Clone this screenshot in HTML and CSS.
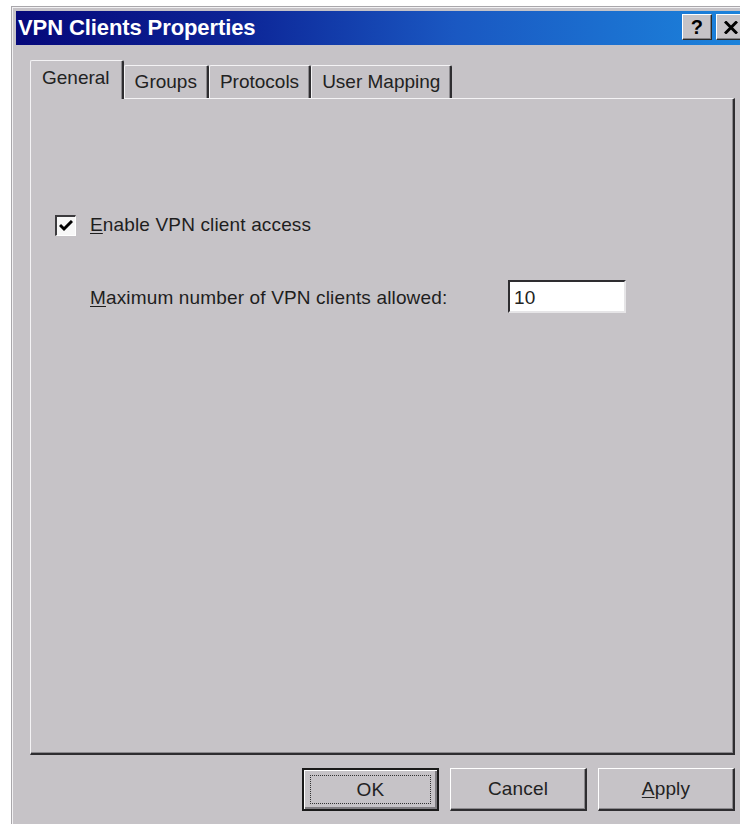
FILE: index.html
```html
<!DOCTYPE html>
<html lang="en">
<head>
<meta charset="utf-8">
<title>VPN Clients Properties</title>
<link rel="stylesheet" href="styles.css">
</head>
<body>
<div class="window">
  <div class="titlebar">
    <span class="title">VPN Clients Properties</span>
    <div class="caption-btns">
      <span class="cbtn help">?</span>
      <span class="cbtn close">
        <svg width="14" height="13" viewBox="0 0 14 13"><path d="M1 0.5 L13 12.5 M13 0.5 L1 12.5" stroke="#000" stroke-width="3" fill="none"/></svg>
      </span>
    </div>
  </div>
  <div class="client">
    <div class="tabs">
      <div class="tab active">General</div>
      <div class="tab">Groups</div>
      <div class="tab">Protocols</div>
      <div class="tab">User Mapping</div>
    </div>
    <div class="panel">
      <div class="check-row">
        <span class="checkbox">
          <svg width="14" height="12" viewBox="0 0 14 12"><path d="M1 5 L5 9 L13 1" stroke="#000" stroke-width="3" fill="none"/></svg>
        </span>
        <span class="check-label"><u>E</u>nable VPN client access</span>
      </div>
      <div class="field-row">
        <span class="field-label"><u>M</u>aximum number of VPN clients allowed:</span>
        <span class="textbox">10</span>
      </div>
    </div>
    <div class="buttons">
      <div class="btn default"><span class="focus">OK</span></div>
      <div class="btn"><span class="focus none">Cancel</span></div>
      <div class="btn"><span class="focus none"><u>A</u>pply</span></div>
    </div>
  </div>
</div>
</body>
</html>
```

FILE: styles.css
```css
html, body {
  margin: 0;
  padding: 0;
  background: #ffffff;
}

body {
  width: 740px;
  height: 824px;
  overflow: hidden;
  font-family: "Liberation Sans", Arial, sans-serif;
  font-size: 19px;
  letter-spacing: 0.15px;
  color: #1e1e1e;
}

u {
  text-decoration-thickness: 1px;
  text-underline-offset: 2px;
}

/* dialog frame */
.window {
  margin: 6px 0 0 11px;
  width: 740px;
  height: 830px;
  box-sizing: border-box;
  padding: 4px 0 0 4px;
  background: #c6c3c7;
  border-top: 1px solid #a9a7ab;
  border-left: 1px solid #a9a7ab;
  box-shadow: inset 1px 1px 0 #f2f1f3;
}

.titlebar {
  width: 732px;
  height: 34px;
  box-sizing: border-box;
  display: flex;
  align-items: center;
  padding: 0 2px 2px 2px;
  background: linear-gradient(to right, #06087a 0%, #0c2496 30%, #1a58c2 60%, #1c84dc 100%);
}

.title {
  color: #ffffff;
  font-weight: bold;
  font-size: 22px;
  letter-spacing: -0.1px;
  padding-top: 2px;
}

.caption-btns {
  margin-left: auto;
  display: flex;
  gap: 4px;
}

.cbtn {
  width: 30px;
  height: 26px;
  box-sizing: border-box;
  display: flex;
  align-items: center;
  justify-content: center;
  background: #c6c3c7;
  border-top: 1px solid #ffffff;
  border-left: 1px solid #ffffff;
  border-right: 1px solid #2a2a2a;
  border-bottom: 1px solid #2a2a2a;
  box-shadow: inset -1px -1px 0 #858387;
  font-weight: bold;
  font-size: 20px;
  color: #000;
}

.client {
  width: 732px;
  box-sizing: border-box;
  padding: 15px 13px 0 14px;
}

/* tab strip */
.tabs {
  display: flex;
  align-items: flex-end;
  height: 38px;
}

.tab {
  height: 33px;
  box-sizing: border-box;
  padding: 0 10px;
  display: flex;
  align-items: center;
  letter-spacing: 0;
  background: #c6c3c7;
  border-top: 1px solid #f4f3f5;
  border-left: 1px solid #f4f3f5;
  border-right: 2px solid #2e2d30;
  box-shadow: inset -1px 0 0 #8b898d;
  border-radius: 2px 2px 0 0;
  color: #222;
}

.tab.active {
  height: 39px;
  margin-bottom: -1px;
  padding: 0 12px 4px 11px;
  position: relative;
  z-index: 1;
}

/* page body */
.panel {
  height: 657px;
  box-sizing: border-box;
  background: #c6c3c7;
  border-top: 1px solid #f4f3f5;
  border-left: 1px solid #f4f3f5;
  border-right: 2px solid #2e2d30;
  border-bottom: 2px solid #2e2d30;
  box-shadow: inset -1px -1px 0 #8b898d;
  padding-top: 115px;
}

.check-row {
  display: flex;
  align-items: center;
  height: 22px;
  padding-left: 24px;
}

.checkbox {
  width: 21px;
  height: 21px;
  box-sizing: border-box;
  display: flex;
  align-items: center;
  justify-content: center;
  background: #f7f7f7;
  border-top: 2px solid #3c3b3e;
  border-left: 2px solid #3c3b3e;
  border-right: 1px solid #ffffff;
  border-bottom: 1px solid #ffffff;
  margin-right: 14px;
}

.checkbox svg {
  margin-top: 1px;
}

.field-row {
  display: flex;
  align-items: center;
  margin-top: 44px;
  padding-left: 59px;
}

.field-label {
  width: 418px;
  flex: none;
  padding-top: 2px;
}

.textbox {
  width: 118px;
  height: 33px;
  box-sizing: border-box;
  display: flex;
  align-items: center;
  padding: 2px 0 0 4px;
  background: #ffffff;
  border-top: 2px solid #2e2d30;
  border-left: 2px solid #2e2d30;
  border-right: 2px solid #e6e5e7;
  border-bottom: 2px solid #e6e5e7;
  color: #222;
}

/* dialog buttons */
.buttons {
  display: flex;
  justify-content: flex-end;
  gap: 11px;
  margin-top: 13px;
}

.btn {
  width: 137px;
  height: 43px;
  box-sizing: border-box;
  display: flex;
  align-items: center;
  justify-content: center;
  background: #c6c3c7;
  border-top: 1px solid #ffffff;
  border-left: 1px solid #ffffff;
  border-right: 2px solid #2e2d30;
  border-bottom: 2px solid #2e2d30;
  box-shadow: inset -1px -1px 0 #8b898d;
  color: #222;
}

.btn.default {
  border: 2px solid #1a1a1a;
  box-shadow: inset 1px 1px 0 #ffffff, inset -2px -2px 0 #7e7c80;
  padding: 5px 6px;
}

.focus {
  display: flex;
  align-items: center;
  justify-content: center;
  width: 100%;
  height: 100%;
  box-sizing: border-box;
  border: 1px dotted #333;
}

.focus.none {
  border: none;
}
```
